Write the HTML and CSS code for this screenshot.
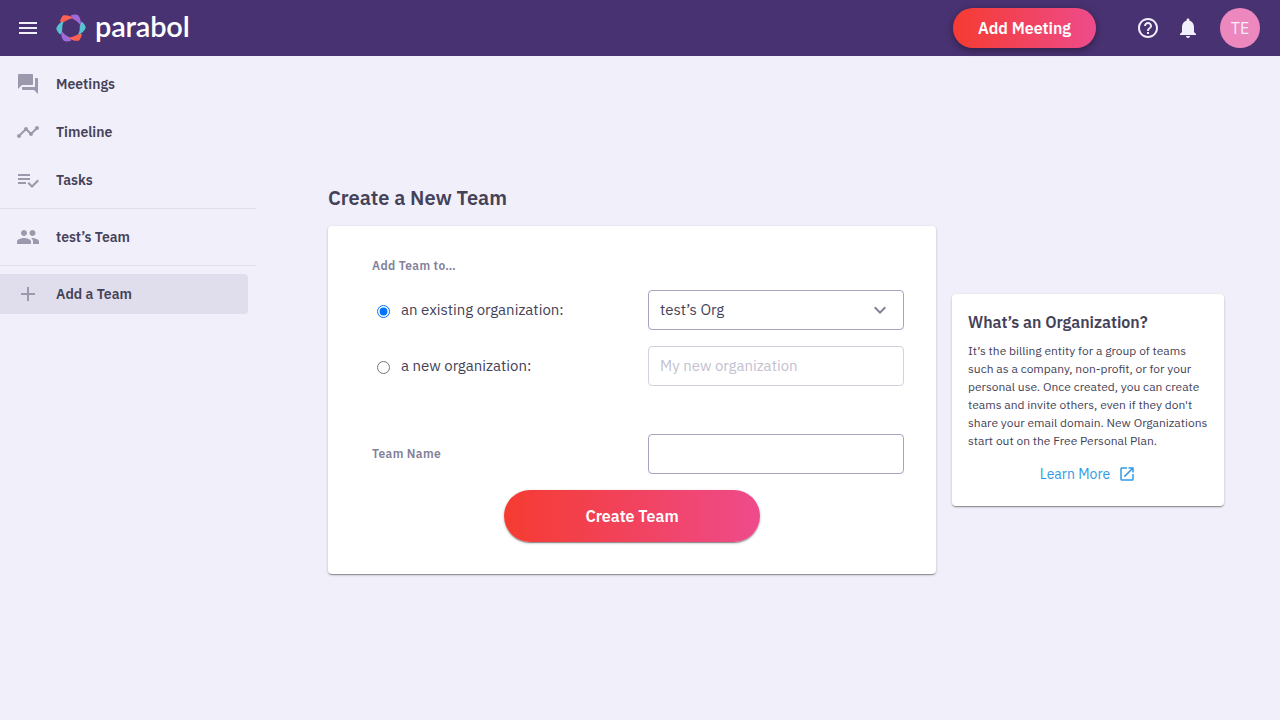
FILE: index.html
```html
<!DOCTYPE html>
<html lang="en">
<head>
<meta charset="utf-8">
<title>Create a New Team | Parabol</title>
<link rel="stylesheet" href="styles.css">
</head>
<body>
<header class="topbar">
  <svg class="icon menu" viewBox="0 0 24 24"><path d="M3 18h18v-2H3v2zm0-5h18v-2H3v2zm0-7v2h18V6H3z"/></svg>
  <svg class="mark" viewBox="-15 -15 30 30">
    <defs><path id="petal" d="M10.600 -6.500C12.900 -4.900 14.600 -2 14.700 -.2C13.600 2.800 10.800 5.800 6.700 7.200C8.200 4.800 8.700 2.600 8.700 .6C8.600 -1.800 9.200 -4.600 10.600 -6.500Z"/></defs>
    <use href="#petal" fill="#56c4cf"/>
    <use href="#petal" fill="#ff6154" transform="rotate(60)"/>
    <use href="#petal" fill="#a06bd6" transform="rotate(120)"/>
    <use href="#petal" fill="#56c4cf" transform="rotate(180)"/>
    <use href="#petal" fill="#ff6154" transform="rotate(240)"/>
    <use href="#petal" fill="#a06bd6" transform="rotate(300)"/>
  </svg>
  <span class="wordmark">parabol</span>
  <button class="pill add-meeting">Add Meeting</button>
  <svg class="icon help" viewBox="0 0 24 24"><path d="M11 18h2v-2h-2v2zm1-16C6.48 2 2 6.48 2 12s4.48 10 10 10 10-4.48 10-10S17.52 2 12 2zm0 18c-4.41 0-8-3.59-8-8s3.59-8 8-8 8 3.59 8 8-3.59 8-8 8zm0-14c-2.21 0-4 1.79-4 4h2c0-1.1.9-2 2-2s2 .9 2 2c0 2-3 1.75-3 5h2c0-2.25 3-2.5 3-5 0-2.21-1.79-4-4-4z"/></svg>
  <svg class="icon bell" viewBox="0 0 24 24"><path d="M12 22c1.1 0 2-.9 2-2h-4c0 1.1.89 2 2 2zm6-6v-5c0-3.07-1.64-5.64-4.5-6.32V4c0-.83-.67-1.5-1.5-1.5s-1.5.67-1.5 1.5v.68C7.63 5.36 6 7.92 6 11v5l-2 2v1h16v-1l-2-2z"/></svg>
  <span class="avatar">TE</span>
</header>
<div class="layout">
  <nav class="sidebar">
    <a class="nav-item"><svg class="icon" viewBox="0 0 24 24"><path d="M21 6h-2v9H6v2c0 .55.45 1 1 1h11l4 4V7c0-.55-.45-1-1-1zm-4 6V3c0-.55-.45-1-1-1H3c-.55 0-1 .45-1 1v14l4-4h10c.55 0 1-.45 1-1z"/></svg><span>Meetings</span></a>
    <a class="nav-item"><svg class="icon" viewBox="0 0 24 24"><path d="M23 8c0 1.1-.9 2-2 2-.18 0-.35-.02-.51-.07l-3.56 3.55c.05.16.07.34.07.52 0 1.1-.9 2-2 2s-2-.9-2-2c0-.18.02-.36.07-.52l-2.55-2.55c-.16.05-.34.07-.52.07s-.36-.02-.52-.07l-4.55 4.56c.05.16.07.33.07.51 0 1.1-.9 2-2 2s-2-.9-2-2 .9-2 2-2c.18 0 .35.02.51.07l4.56-4.55C8.02 9.36 8 9.18 8 9c0-1.1.9-2 2-2s2 .9 2 2c0 .18-.02.36-.07.52l2.55 2.55c.16-.05.34-.07.52-.07s.36.02.52.07l3.55-3.56C19.02 8.35 19 8.18 19 8c0-1.1.9-2 2-2s2 .9 2 2z"/></svg><span>Timeline</span></a>
    <a class="nav-item"><svg class="icon" viewBox="0 0 24 24"><path d="M14 10H2v2h12v-2zm0-4H2v2h12V6zM2 16h8v-2H2v2zm19.5-4.5L23 13l-6.99 7-4.51-4.5L13 14l3.01 3 5.49-5.5z"/></svg><span>Tasks</span></a>
    <hr class="rule">
    <a class="nav-item"><svg class="icon" viewBox="0 0 24 24"><path d="M16.5 11c1.66 0 2.99-1.34 2.99-3s-1.330-3-2.99-3-3 1.340-3 3 1.340 3 3 3zm-8.500 0c1.660 0 2.990-1.340 2.990-3S9.660 5 8 5 5 6.340 5 8s1.340 3 3 3zm0 2c-2.330 0-7 1.170-7 3.500V19h14v-2.500C15 14.170 10.330 13 8 13zm8 0c-.29 0-.62.02-.97.05C16.190 13.890 17 15.020 17 16.500V19h6v-2.500c0-2.330-4.670-3.500-7-3.500z"/></svg><span>test’s Team</span></a>
    <hr class="rule">
    <a class="nav-item selected"><svg class="icon" viewBox="0 0 24 24"><path d="M19 13h-6v6h-2v-6H5v-2h6V5h2v6h6v2z"/></svg><span>Add a Team</span></a>
  </nav>
  <main class="content">
    <section class="create">
      <h1 class="title">Create a New Team</h1>
      <form class="card form">
        <div class="label">Add Team to…</div>
        <div class="row">
          <label class="choice"><input type="radio" name="org" checked><span>an existing organization:</span></label>
          <div class="field"><span>test’s Org</span><svg class="chevron" viewBox="0 0 24 24"><path d="M7.410 8.590 12 13.170l4.590-4.580L18 10l-6 6-6-6z"/></svg></div>
        </div>
        <div class="row">
          <label class="choice"><input type="radio" name="org"><span>a new organization:</span></label>
          <div class="field disabled"><span>My new organization</span></div>
        </div>
        <div class="row name-row">
          <div class="label">Team Name</div>
          <div class="field"></div>
        </div>
        <button type="button" class="pill create-team">Create Team</button>
      </form>
    </section>
    <aside class="card info">
      <h2 class="info-title">What’s an Organization?</h2>
      <p class="copy">It’s the billing entity for a group of teams<br>such as a company, non-profit, or for your<br>personal use. Once created, you can create<br>teams and invite others, even if they don't<br>share your email domain. New Organizations<br>start out on the Free Personal Plan.</p>
      <a class="learn"><span>Learn More</span><svg class="ext" viewBox="0 0 24 24"><path d="M19 19H5V5h7V3H5c-1.110 0-2 .9-2 2v14c0 1.100.89 2 2 2h14c1.100 0 2-.9 2-2v-7h-2v7zM14 3v2h3.590l-9.830 9.830 1.410 1.410L19 6.410V10h2V3h-7z"/></svg></a>
    </aside>
  </main>
</div>
</body>
</html>
```
FILE: styles.css
```css
* { box-sizing: border-box; }
body {
  margin: 0;
  height: 720px;
  overflow: hidden;
  background: #f1effa;
  color: #444258;
  font-family: "IBM Plex Sans", Roboto, "Noto Sans", sans-serif;
  font-size: 15px;
}
span { white-space: nowrap; }
.icon { width: 24px; height: 24px; fill: currentColor; flex: none; }
.topbar {
  display: flex;
  align-items: center;
  height: 56px;
  padding: 0 20px 0 16px;
  background: #493272;
  color: #f1effa;
}
.mark { width: 30px; height: 30px; margin-left: 16px; flex: none; }
.wordmark {
  margin: -5px 0 0 9px;
  color: #fff;
  font: 600 29px/40px Lato, sans-serif;
  letter-spacing: -0.2px;
}
.pill {
  border: 0;
  padding: 0;
  color: #fff;
  background: linear-gradient(to right, #f53b31, #ee4b8b);
  font: 600 16px/24px "IBM Plex Sans", Roboto, sans-serif;
}
.add-meeting {
  width: 143px;
  height: 40px;
  margin-left: auto;
  border-radius: 20px;
  box-shadow: 0 3px 6px rgba(0,0,0,.22), 0 1px 10px rgba(0,0,0,.18);
}
.help { margin-left: 40px; }
.bell { margin-left: 16px; }
.avatar {
  width: 40px;
  height: 40px;
  margin-left: 20px;
  border-radius: 50%;
  background: #ed88bf;
  font-size: 16px;
  line-height: 40px;
  text-align: center;
}
.layout { display: flex; height: 664px; }
.sidebar { width: 256px; padding-top: 8px; flex: none; }
.nav-item {
  display: flex;
  align-items: center;
  gap: 16px;
  width: 248px;
  height: 40px;
  margin-bottom: 8px;
  padding-left: 16px;
  border-radius: 0 4px 4px 0;
  font-size: 14px;
  font-weight: 600;
}
.nav-item .icon { color: #9c99ad; }
.selected { background: #e0ddec; }
.rule { height: 1px; margin: 0 0 8px; border: 0; background: #e0ddec; }
.content { display: flex; align-items: flex-start; gap: 16px; padding: 126px 0 0 72px; }
.create { width: 608px; }
.title { margin: 0 0 12px; font-size: 20px; font-weight: 600; line-height: 32px; }
.card {
  background: #fff;
  border-radius: 4px;
  box-shadow: 0 1px 3px rgba(0,0,0,.2), 0 1px 1px rgba(0,0,0,.14), 0 2px 1px -1px rgba(0,0,0,.2);
}
.form { height: 348px; padding: 32px 32px 32px 44px; }
.label {
  color: #82809a;
  font-size: 12px;
  font-weight: 600;
  line-height: 16px;
  letter-spacing: 0.36px;
}
.row { display: flex; align-items: center; justify-content: space-between; margin-top: 16px; }
.choice { display: flex; align-items: center; line-height: 24px; }
.choice input { width: 13px; height: 13px; margin: 3px 11px 0 5px; }
.field {
  display: flex;
  align-items: center;
  justify-content: space-between;
  width: 256px;
  height: 40px;
  padding: 0 11px;
  border: 1px solid #a7a3c2;
  border-radius: 4px;
  line-height: 24px;
}
.chevron { width: 24px; height: 24px; fill: #82809a; }
.disabled { border-color: #d3d1e0; color: #c3c1cf; }
.name-row { margin-top: 48px; }
.create-team {
  display: block;
  width: 256px;
  height: 52px;
  margin: 16px 0 0 132px;
  border-radius: 26px;
  box-shadow: 0 1px 3px rgba(0,0,0,.25), 0 1px 1px rgba(0,0,0,.18), 0 2px 1px -1px rgba(0,0,0,.2);
}
.info { width: 272px; height: 212px; margin-top: 112px; padding: 16px; }
.info-title { margin: 0; font-size: 16px; font-weight: 600; line-height: 24px; }
.copy { margin: 8px 0 0; font-size: 12px; line-height: 18px; }
.learn {
  display: flex;
  align-items: center;
  justify-content: center;
  gap: 8px;
  margin-top: 14px;
  color: #329ae5;
  font-size: 14px;
  line-height: 20px;
}
.ext { width: 18px; height: 18px; fill: currentColor; }
```
